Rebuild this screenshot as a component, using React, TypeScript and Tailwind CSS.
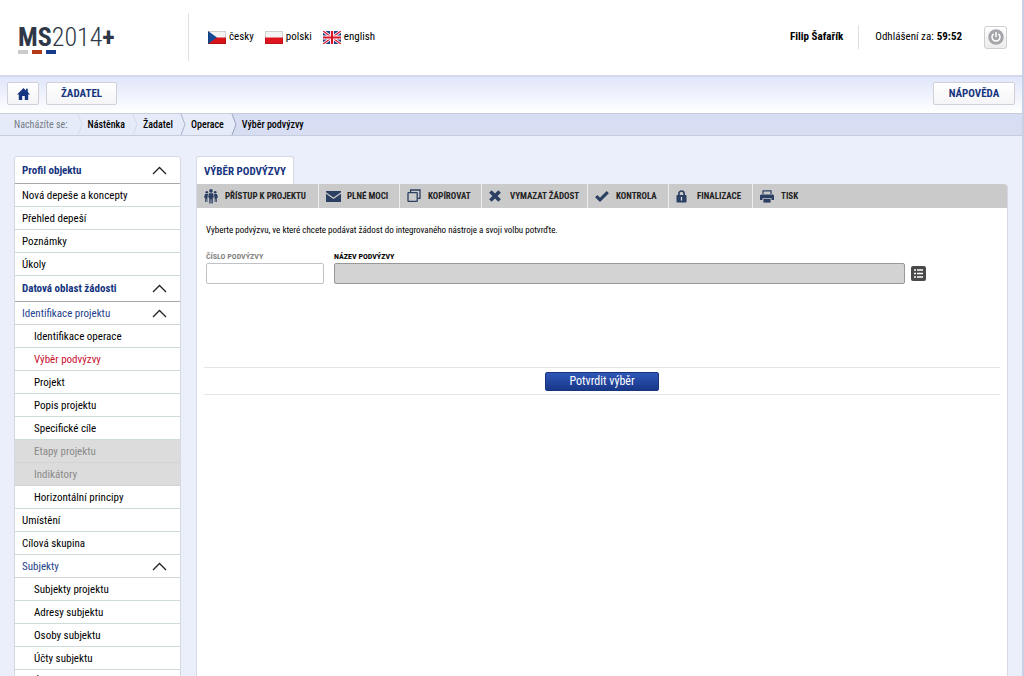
import { useState } from 'react';

type Item = { label: string; kind?: 'section' | 'group' | 'sub' | 'active' | 'disabled' };

const menu: Item[] = [
    { label: 'Profil objektu', kind: 'section' },
    { label: 'Nová depeše a koncepty' },
    { label: 'Přehled depeší' },
    { label: 'Poznámky' },
    { label: 'Úkoly' },
    { label: 'Datová oblast žádosti', kind: 'section' },
    { label: 'Identifikace projektu', kind: 'group' },
    { label: 'Identifikace operace', kind: 'sub' },
    { label: 'Výběr podvýzvy', kind: 'active' },
    { label: 'Projekt', kind: 'sub' },
    { label: 'Popis projektu', kind: 'sub' },
    { label: 'Specifické cíle', kind: 'sub' },
    { label: 'Etapy projektu', kind: 'disabled' },
    { label: 'Indikátory', kind: 'disabled' },
    { label: 'Horizontální principy', kind: 'sub' },
    { label: 'Umístění' },
    { label: 'Cílová skupina' },
    { label: 'Subjekty', kind: 'group' },
    { label: 'Subjekty projektu', kind: 'sub' },
    { label: 'Adresy subjektu', kind: 'sub' },
    { label: 'Osoby subjektu', kind: 'sub' },
    { label: 'Účty subjektu', kind: 'sub' },
    { label: 'Účetní období', kind: 'sub' },
];

const rowStyle = {
    section: 'h-[26px] border-[#a5a8ab] pl-[7px] font-bold text-[#16347f]',
    group: 'h-[23px] border-[#cdd5db] pl-[7px] pt-px text-[#23428c]',
    sub: 'h-[23px] border-[#cfdada] pl-[19px] pt-[2px] text-black',
    active: 'h-[23px] border-[#cfdada] pl-[19px] pt-[2px] text-[#c8102e]',
    disabled: 'h-[23px] border-[#d3d3d3] bg-[#dcdcdc] pl-[19px] pt-[2px] text-[#8a8a8a]',
    plain: 'h-[23px] border-[#cfdada] pl-[7px] pt-[2px] text-black',
};

function MenuRow({ item }: { item: Item }) {
    const kind = item.kind ?? 'plain';
    const opens = kind === 'section' || kind === 'group';
    return (
        <li>
            <a href="#" className={`flex items-center justify-between border-b pr-[13px] ${rowStyle[kind]}`}>
                {item.label}
                {opens && (
                    <svg width="15" height="9" viewBox="0 0 15 9" fill="none" stroke="#222" strokeWidth="1.3">
                        <path d="M1 8 7.5 1.5 14 8" />
                    </svg>
                )}
            </a>
        </li>
    );
}

/* Toolbar icons */
const PeopleIcon = () => (
    <svg width="14" height="15" viewBox="0 0 14 15" fill="#2b3f63">
        <circle cx="7" cy="1.9" r="1.8" />
        <circle cx="2.8" cy="3.2" r="1.3" />
        <circle cx="11.2" cy="3.2" r="1.3" />
        <path d="M4.8 4.2h4.4l.6 4.4-1 .2V14.4H7.4v-4.2h-.8v4.2H5.2V8.8l-1-.2z" />
        <path d="M1 5h3l-.6 4.4V13H2.5v-3h-.4v3H1.2V9L0 8.4z" />
        <path d="M13 5h-3l.6 4.4V13h.9v-3h.4v3h.9V9l1.2-.6z" />
    </svg>
);
const MailIcon = () => (
    <svg width="15" height="11" viewBox="0 0 15 11" fill="#2b3f63">
        <path d="M0 0h15v1.2L7.5 6.4 0 1.2z" />
        <path d="M0 2.8 7.5 8 15 2.8V11H0z" />
    </svg>
);
const CopyIcon = () => (
    <svg width="14" height="14" viewBox="0 0 14 14" fill="none" stroke="#2b3f63" strokeWidth="1.3">
        <path d="M3.6 3.4V1h9.4v8.4h-2.4" />
        <rect x="1" y="3.6" width="9.2" height="8.8" rx=".6" />
    </svg>
);
const CrossIcon = () => (
    <svg width="12" height="12" viewBox="0 0 12 12" stroke="#2b3f63" strokeWidth="3.6">
        <path d="M1.4 1.4l9.2 9.2M10.6 1.4l-9.2 9.2" />
    </svg>
);
const CheckIcon = () => (
    <svg width="14" height="11" viewBox="0 0 14 11" fill="none" stroke="#2b3f63" strokeWidth="3.2">
        <path d="M1.2 5.2 5 8.8 12.8 1.2" />
    </svg>
);
const LockIcon = () => (
    <svg width="11" height="13" viewBox="0 0 11 13">
        <path d="M2.9 6V3.6a2.6 2.6 0 0 1 5.2 0V6" fill="none" stroke="#2b3f63" strokeWidth="1.7" />
        <rect x=".5" y="5" width="10" height="7.6" rx=".8" fill="#2b3f63" />
        <path d="M5.5 7v3.6" stroke="#d8dde6" strokeWidth="1.3" />
    </svg>
);
const PrintIcon = () => (
    <svg width="14" height="13" viewBox="0 0 14 13" fill="#2b3f63">
        <path d="M3 4V.8h8V4" fill="none" stroke="#2b3f63" strokeWidth="1.2" />
        <path d="M1 4.4h12l1 1V10h-2.4V8.2H2.4V10H0V5.4z" />
        <path d="M3.4 9h7.2v3.6H3.4z" />
    </svg>
);

const tools = [
    { label: 'PŘÍSTUP K PROJEKTU', icon: <PeopleIcon />, box: 'w-[122px]' },
    { label: 'PLNÉ MOCI', icon: <MailIcon />, box: 'w-[81px]' },
    { label: 'KOPÍROVAT', icon: <CopyIcon />, box: 'w-[82px]' },
    { label: 'VYMAZAT ŽÁDOST', icon: <CrossIcon />, box: 'w-[106px]' },
    { label: 'KONTROLA', icon: <CheckIcon />, box: 'w-[81px]' },
    { label: 'FINALIZACE', icon: <LockIcon />, box: 'w-[84px]' },
    { label: 'TISK', icon: <PrintIcon />, box: 'w-[60px]' },
];

/* Flags */
const CzechFlag = () => (
    <svg width="18" height="13" viewBox="0 0 18 13">
        <rect width="18" height="13" fill="#d7141a" />
        <rect width="18" height="6.5" fill="#f4f4f4" />
        <path d="M0 0 9 6.5 0 13z" fill="#174a96" />
        <rect x=".5" y=".5" width="17" height="12" fill="none" stroke="#000" strokeOpacity=".15" />
    </svg>
);
const PolishFlag = () => (
    <svg width="18" height="13" viewBox="0 0 18 13">
        <rect width="18" height="13" fill="#e0141e" />
        <rect width="18" height="6.5" fill="#f4f4f4" />
        <rect x=".5" y=".5" width="17" height="12" fill="none" stroke="#000" strokeOpacity=".15" />
    </svg>
);
const BritishFlag = () => (
    <svg width="18" height="13" viewBox="0 0 18 13">
        <rect width="18" height="13" fill="#26408c" />
        <path d="M0 0l18 13M18 0 0 13" stroke="#fff" strokeWidth="2.8" />
        <path d="M0 0l18 13M18 0 0 13" stroke="#d7142a" strokeWidth="1.2" />
        <path d="M9 0v13M0 6.5h18" stroke="#fff" strokeWidth="4" />
        <path d="M9 0v13M0 6.5h18" stroke="#d7142a" strokeWidth="2.2" />
    </svg>
);

const Arrow = ({ stroke, left, right }: { stroke: string; left: string; right: string }) => (
    <svg className="shrink-0" width="8" height="21" viewBox="0 0 8 21">
        <rect width="8" height="21" fill={right} />
        <path d="M0 0h3l4 10.5L3 21H0z" fill={left} />
        <path d="M3 0l4 10.5L3 21" fill="none" stroke={stroke} />
    </svg>
);

const navButton = 'flex h-[23px] items-center justify-center rounded-[2px] border border-[#d0d1d6] bg-linear-to-b from-white to-[#f5f5f7] pt-px text-[11px] font-bold text-[#16347f]';

export default function App() {
    const [code, setCode] = useState('');

    return (
        <div className="flex h-screen flex-col overflow-hidden border-r-2 border-[#c9d0e6] bg-[#ebeffb] font-['Roboto_Condensed','Roboto',sans-serif] text-[11px] leading-[14px] text-black">
            <header className="flex h-[75px] shrink-0 items-center bg-white pr-[15px] pb-px">
                <a href="#" className="ml-[18px] flex w-[170px] flex-col pt-[3px] text-[#2f3847]">
                    <span className="text-[26px] leading-[26px] font-light">
                        <b className="font-bold">MS</b>2014<b className="font-bold">+</b>
                    </span>
                    <span className="flex gap-1">
                        <i className="h-1 w-[10px] bg-[#cbcbcb]" />
                        <i className="h-1 w-[10px] bg-[#b23c17]" />
                        <i className="h-1 w-[10px] bg-[#173a8a]" />
                    </span>
                </a>
                <nav className="flex h-[48px] items-center gap-[11px] border-l border-[#e0e0e0] pl-[19px]">
                    <a href="#" className="flex items-center gap-[3px]"><CzechFlag />česky</a>
                    <a href="#" className="flex items-center gap-[3px]"><PolishFlag />polski</a>
                    <a href="#" className="flex items-center gap-[3px]"><BritishFlag />english</a>
                </nav>
                <div className="ml-auto flex items-center">
                    <b className="pr-[15px]">Filip Šafařík</b>
                    <span className="flex h-[24px] items-center gap-[3px] border-l border-[#dedede] pr-[22px] pl-[16px]">
                        Odhlášení za: <b>59:52</b>
                    </span>
                    <button aria-label="Odhlásit" className="flex size-[23px] items-center justify-center rounded-[3px] border border-[#cfcfcf] bg-linear-to-b from-white to-[#ececec]">
                        <svg width="16" height="16" viewBox="0 0 16 16" fill="none" stroke="#fff" strokeWidth="1.5">
                            <circle cx="8" cy="8" r="7.8" fill="#a4a6aa" stroke="none" />
                            <path d="M5.6 4.8a4 4 0 1 0 4.8 0M8 3v5" />
                        </svg>
                    </button>
                </div>
            </header>

            <div className="flex h-[38px] shrink-0 items-center gap-[7px] border-t-2 border-[#d3d9e8] bg-linear-to-b from-[#e0e6fa] to-white px-[7px] pb-[4px]">
                <button aria-label="Domů" className={`${navButton} w-[32px]`}>
                    <svg width="13" height="12" viewBox="0 0 13 12" fill="#16347f">
                        <path d="M6.5 0 9 2.4V.8h1.8v3.3L13 6.4h-1.8V12H7.8V8H5.2v4H1.8V6.4H0z" />
                    </svg>
                </button>
                <button className={`${navButton} w-[71px]`}>ŽADATEL</button>
                <button className={`${navButton} ml-auto w-[82px]`}>NÁPOVĚDA</button>
            </div>

            <nav className="flex h-[23px] shrink-0 border-y border-[#c6cddd] bg-[#d7def3] text-[10px] leading-[21px] font-medium">
                <span className="bg-[#e6ebf9] pr-[7px] pl-[14px] font-normal text-[#757b86]">Nacházíte se:</span>
                <Arrow stroke="#d3daeb" left="#e6ebf9" right="#e6ebf9" />
                <a href="#" className="bg-[#e6ebf9] px-[5px]">Nástěnka</a>
                <Arrow stroke="#d3daeb" left="#e6ebf9" right="#e6ebf9" />
                <a href="#" className="bg-[#e6ebf9] px-[5px]">Žadatel</a>
                <Arrow stroke="#a9b3cb" left="#e6ebf9" right="#e6ebf9" />
                <a href="#" className="bg-[#e6ebf9] px-[5px]">Operace</a>
                <Arrow stroke="#98a3bf" left="#e6ebf9" right="#d7def3" />
                <span className="px-[5px]">Výběr podvýzvy</span>
            </nav>

            <div className="flex min-h-0 grow items-start gap-[15px] pt-[20px] pr-[14px] pl-[14px]">
                <aside className="w-[167px] shrink-0 rounded-t-[3px] border border-[#d5d9e2] bg-white pt-px">
                    <ul>
                        {menu.map((item) => <MenuRow key={item.label} item={item} />)}
                    </ul>
                </aside>

                <main className="flex grow flex-col self-stretch">
                    <h1 className="flex h-[28px] items-center self-start rounded-t-[3px] border border-b-0 border-[#d5d9e2] bg-white px-[7px] pt-[2px] text-[11px] font-bold text-[#16347f]">
                        VÝBĚR PODVÝZVY
                    </h1>
                    <section className="grow rounded-tr-[3px] border-x border-[#d5d9e2] bg-white">
                        <div className="flex h-[24px] rounded-tr-[3px] bg-[#cacaca]">
                            {tools.map((tool) => (
                                <button key={tool.label} className={`flex items-center border-r border-[#ededed] pl-[7px] text-[9px] font-bold text-[#222] last:border-0 ${tool.box}`}>
                                    <span className="flex w-[21px] shrink-0">{tool.icon}</span>
                                    <span className="whitespace-nowrap">{tool.label}</span>
                                </button>
                            ))}
                        </div>

                        <div className="px-[7px]">
                            <p className="px-[2px] pt-[15px] text-[9px]">
                                Vyberte podvýzvu, ve které chcete podávat žádost do integrovaného nástroje a svoji volbu potvrďte.
                            </p>
                            <div className="flex items-end gap-[10px] px-[2px] pt-[14px] pb-[83px] text-[8px] leading-[12px] font-bold">
                                <label className="flex w-[118px] flex-col text-[#858585]">
                                    ČÍSLO PODVÝZVY
                                    <input value={code} onChange={(e) => setCode(e.target.value)} className="h-[21px] rounded-[2px] border border-[#bfc2c7] bg-white px-1 text-[11px] text-black" />
                                </label>
                                <label className="flex w-[571px] min-w-0 flex-col">
                                    NÁZEV PODVÝZVY
                                    <input readOnly className="h-[21px] rounded-[2px] border border-[#989898] bg-[#d3d3d3] px-1 text-[11px]" />
                                </label>
                                <button aria-label="Vybrat ze seznamu" className="mb-[3px] -ml-[4px] flex size-[15px] items-center justify-center rounded-[2px] bg-[#4a4a4a]">
                                    <svg width="9" height="9" viewBox="0 0 9 9" stroke="#fff" strokeWidth="1.4">
                                        <path d="M0 1h2M3 1h6M0 4.5h2M3 4.5h6M0 8h2M3 8h6" />
                                    </svg>
                                </button>
                            </div>
                            <div className="flex h-[28px] items-center justify-center border-y border-[#e6e6e6]">
                                <button className="h-[19px] w-[114px] rounded-[2px] border border-[#17357e] bg-linear-to-b from-[#2f57b8] to-[#183788] text-[12px] leading-[17px] text-white">
                                    Potvrdit výběr
                                </button>
                            </div>
                        </div>
                    </section>
                </main>
            </div>
        </div>
    );
}
